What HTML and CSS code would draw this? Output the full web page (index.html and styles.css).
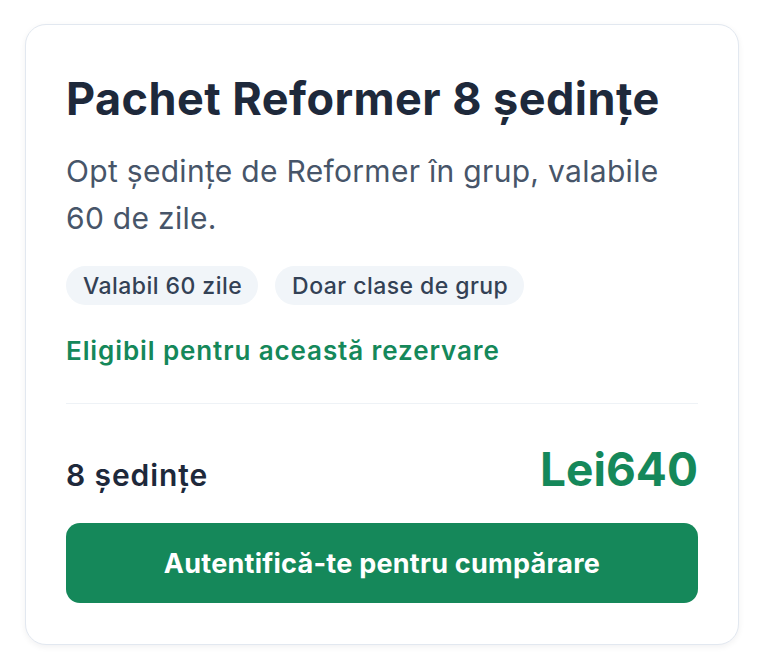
FILE: index.html
```html
<!DOCTYPE html>
<html lang="ro">
<head>
<meta charset="utf-8">
<title>Pachet Reformer 8 ședințe</title>
<link rel="stylesheet" href="styles.css">
</head>
<body>
<main class="page">
  <article class="package-card">
    <h2 class="package-title">Pachet Reformer 8 ședințe</h2>
    <p class="package-desc">Opt ședințe de Reformer în grup, valabile 60 de zile.</p>
    <ul class="tag-list">
      <li class="tag">Valabil 60 zile</li>
      <li class="tag">Doar clase de grup</li>
    </ul>
    <p class="eligible">Eligibil pentru această rezervare</p>
    <hr class="divider">
    <div class="package-footer">
      <span class="sessions">8 ședințe</span>
      <span class="price">Lei640</span>
    </div>
    <button class="buy-button" type="button">Autentifică-te pentru cumpărare</button>
  </article>
</main>
</body>
</html>
```

FILE: styles.css
```css
* {
  box-sizing: border-box;
}

html, body {
  margin: 0;
  background: #ffffff;
}

body {
  font-family: Inter, "Noto Sans", "Liberation Sans", sans-serif;
  color: #1e293b;
}

.page {
  padding: 24px 25px;
}

.package-card {
  border: 1px solid #e2e8f0;
  border-radius: 21px;
  background: #ffffff;
  padding: 40px 40px 41px;
  box-shadow: 0 2px 6px rgba(15, 23, 42, 0.06);
}

.package-title {
  margin: 0;
  font-size: 45px;
  line-height: 68px;
  font-weight: 700;
  color: #1e293b;
  letter-spacing: 0.45px;
}

.package-desc {
  margin: 15px 0 0;
  font-size: 30px;
  line-height: 47px;
  letter-spacing: 0.3px;
  color: #475569;
  max-width: 610px;
}

.tag-list {
  list-style: none;
  margin: 24px 0 0;
  padding: 0;
  display: flex;
  gap: 17px;
}

.tag {
  height: 39px;
  display: flex;
  align-items: center;
  padding: 0 16px 0 17px;
  border-radius: 20px;
  background: #f1f5f9;
  color: #334155;
  font-size: 23px;
  font-weight: 500;
  letter-spacing: 0.45px;
}

.eligible {
  margin: 28px 0 0;
  font-size: 26px;
  line-height: 36px;
  font-weight: 600;
  letter-spacing: 0.9px;
  color: #15885a;
}

.divider {
  margin: 34px 0 0;
  border: 0;
  border-top: 1px solid #eef2f6;
}

.package-footer {
  margin-top: 37px;
  display: flex;
  justify-content: space-between;
  align-items: baseline;
  line-height: 56px;
}

.sessions {
  font-size: 30px;
  font-weight: 600;
  letter-spacing: 0.9px;
  color: #1e293b;
}

.price {
  font-size: 46px;
  font-weight: 700;
  color: #15885a;
}

.buy-button {
  display: block;
  width: 100%;
  height: 80px;
  margin-top: 20px;
  border: 0;
  border-radius: 14px;
  background: #15885a;
  color: #ffffff;
  font-family: inherit;
  font-size: 27px;
  font-weight: 700;
  letter-spacing: 0.25px;
}
```
